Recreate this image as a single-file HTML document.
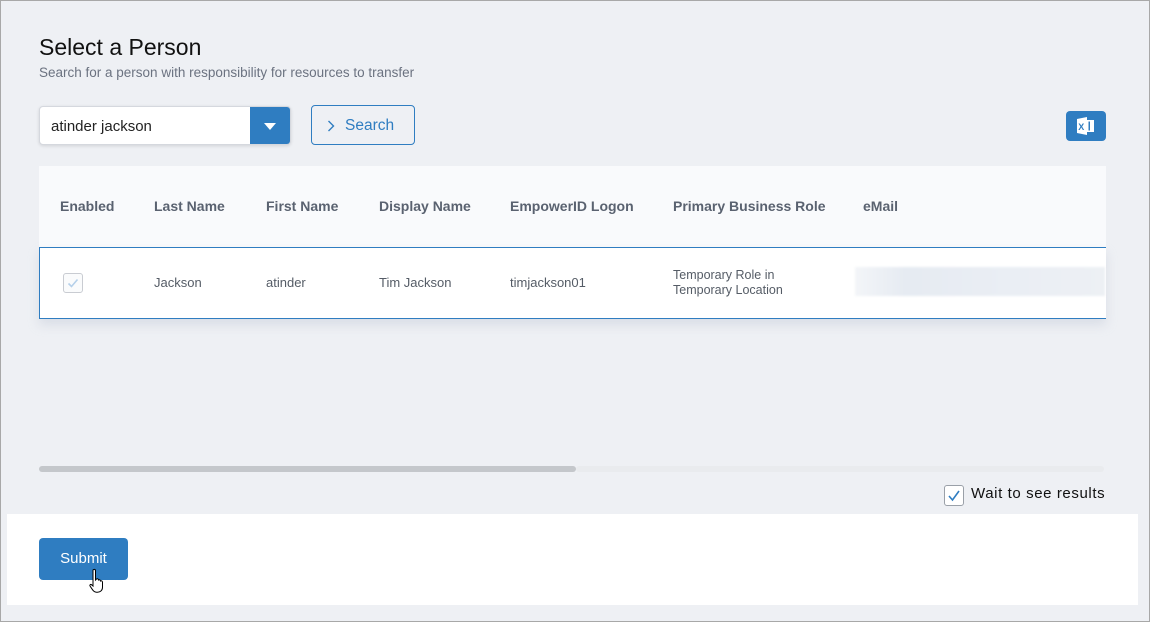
<!DOCTYPE html>
<html><head><meta charset="utf-8"><style>
*{box-sizing:border-box;margin:0;padding:0}
html,body{width:1150px;height:622px;overflow:hidden}
body{background:#eef0f4;font-family:"Liberation Sans",sans-serif;position:relative}
.frame{position:absolute;left:0;top:0;width:1150px;height:622px;border:1px solid #a8a8a8;pointer-events:none}
.abs{position:absolute}
h1{position:absolute;left:39px;top:34px;font-size:23px;font-weight:400;color:#111}
.sub{left:39px;top:65px;font-size:13.5px;color:#6b7280}
.inp{left:39px;top:106px;width:252px;height:39px;background:#fff;border:1px solid #d5d8de;border-radius:4px;box-shadow:0 1px 3px rgba(0,0,0,.12);overflow:hidden}
.inp span{position:absolute;left:11px;top:11px;font-size:15px;color:#222}
.dd{position:absolute;right:0;top:0;width:40px;height:39px;background:#2f7dc1}
.dd:after{content:"";position:absolute;left:14px;top:16px;border-left:6px solid transparent;border-right:6px solid transparent;border-top:7px solid #fff}
.sbtn{left:311px;top:105px;width:104px;height:40px;border:1px solid #2f7dc1;border-radius:4px;color:#2f7dc1;font-size:15.5px;padding:11px 0 0 33px}
.sbtn svg{position:absolute;left:15px;top:14px}
.xl{left:1066px;top:111px;width:40px;height:30px;background:#2f7dc1;border-radius:4px}
.thead{left:39px;top:166px;width:1067px;height:81px;background:#f9fafc}
.th{position:absolute;top:198px;font-size:14px;font-weight:700;color:#5a6270}
.row{left:39px;top:247px;width:1067px;height:72px;background:#fff;border-top:1px solid #2f7dc1;border-bottom:1px solid #2f7dc1;border-left:1px solid #2f7dc1;box-shadow:0 6px 10px rgba(180,190,205,.35)}
.td{position:absolute;font-size:13px;color:#555c66}
.cb{left:63px;top:273px;width:20px;height:20px;border:1px solid #c9ccd2;border-radius:3px;background:#fafbfc}
.blur{left:855px;top:267px;width:250px;height:29px;background:linear-gradient(90deg,#f3f5f8,#e6ebf2 20%,#eaeef4 60%,#edf0f4);filter:blur(1px)}
.sc1{left:39px;top:466px;width:537px;height:6px;border-radius:3px;background:#c4c7cb}
.sc2{left:576px;top:466px;width:528px;height:6px;background:#e9ebee;border-radius:3px}
.wcb{left:944px;top:485px;width:20px;height:21px;border:1px solid #9aa0a8;border-radius:3px;background:#fff}
.wt{left:971px;top:485px;font-size:15px;color:#111;letter-spacing:0.6px}
.panel{left:7px;top:514px;width:1131px;height:91px;background:#fff}
.sub2{left:39px;top:538px;width:89px;height:42px;background:#2f7dc1;border-radius:4px;color:#fff;font-size:15px;text-align:center;padding-top:12px}
</style></head><body>
<h1>Select a Person</h1>
<div class="abs sub">Search for a person with responsibility for resources to transfer</div>
<div class="abs inp"><span>atinder jackson</span><div class="dd"></div></div>
<div class="abs sbtn"><svg width="8" height="12" viewBox="0 0 8 12"><path d="M1.5 1l5 5-5 5" fill="none" stroke="#2f7dc1" stroke-width="1.4"/></svg>Search</div>
<div class="abs xl"><svg width="40" height="30" viewBox="0 0 40 30"><path d="M11 8l10-2v18l-10-2z" fill="#fff"/><rect x="21" y="9" width="7" height="12" fill="#fff"/><rect x="22.5" y="10.5" width="1.5" height="9" fill="#2f7dc1"/><text x="12.3" y="19" font-size="9" font-weight="700" fill="#2f7dc1" font-family="Liberation Sans">X</text></svg></div>
<div class="abs thead"></div>
<div class="th" style="left:60px">Enabled</div>
<div class="th" style="left:154px">Last Name</div>
<div class="th" style="left:266px">First Name</div>
<div class="th" style="left:379px">Display Name</div>
<div class="th" style="left:510px">EmpowerID Logon</div>
<div class="th" style="left:673px">Primary Business Role</div>
<div class="th" style="left:863px">eMail</div>
<div class="abs row"></div>
<div class="abs cb"><svg width="18" height="18" viewBox="0 0 18 18"><path d="M4.5 9.5l3 3 6-7" fill="none" stroke="#b5d0ea" stroke-width="1.6"/></svg></div>
<div class="td" style="left:154px;top:275px">Jackson</div>
<div class="td" style="left:266px;top:275px">atinder</div>
<div class="td" style="left:379px;top:275px">Tim Jackson</div>
<div class="td" style="left:510px;top:275px">timjackson01</div>
<div class="td" style="left:673px;top:268px;font-size:12.5px;line-height:15px">Temporary Role in<br>Temporary Location</div>
<div class="abs blur"></div>
<div class="abs sc2"></div><div class="abs sc1"></div>
<div class="abs wcb"><svg width="18" height="19" viewBox="0 0 18 19"><path d="M4 10l3.5 4 6.5-9" fill="none" stroke="#2f7dc1" stroke-width="1.6"/></svg></div>
<div class="abs wt">Wait to see results</div>
<div class="abs panel"></div>
<div class="abs sub2">Submit</div>
<svg class="abs" style="left:88px;top:568px" width="22" height="26" viewBox="0 0 22 26"><path d="M5 2c1-1 2.5-1 2.5 1v9l1-1c1-.6 2 0 2 1 1-.6 2 0 2 1 1-.6 2 .2 2 1.2v5c0 3-2 5-5 5h-1c-2 0-3-1-4-2.5L2 18c-.6-1 .5-2 1.5-1.3L5 18z" fill="#fff" stroke="#000" stroke-width="1"/></svg>
<div class="frame"></div>
</body></html>
